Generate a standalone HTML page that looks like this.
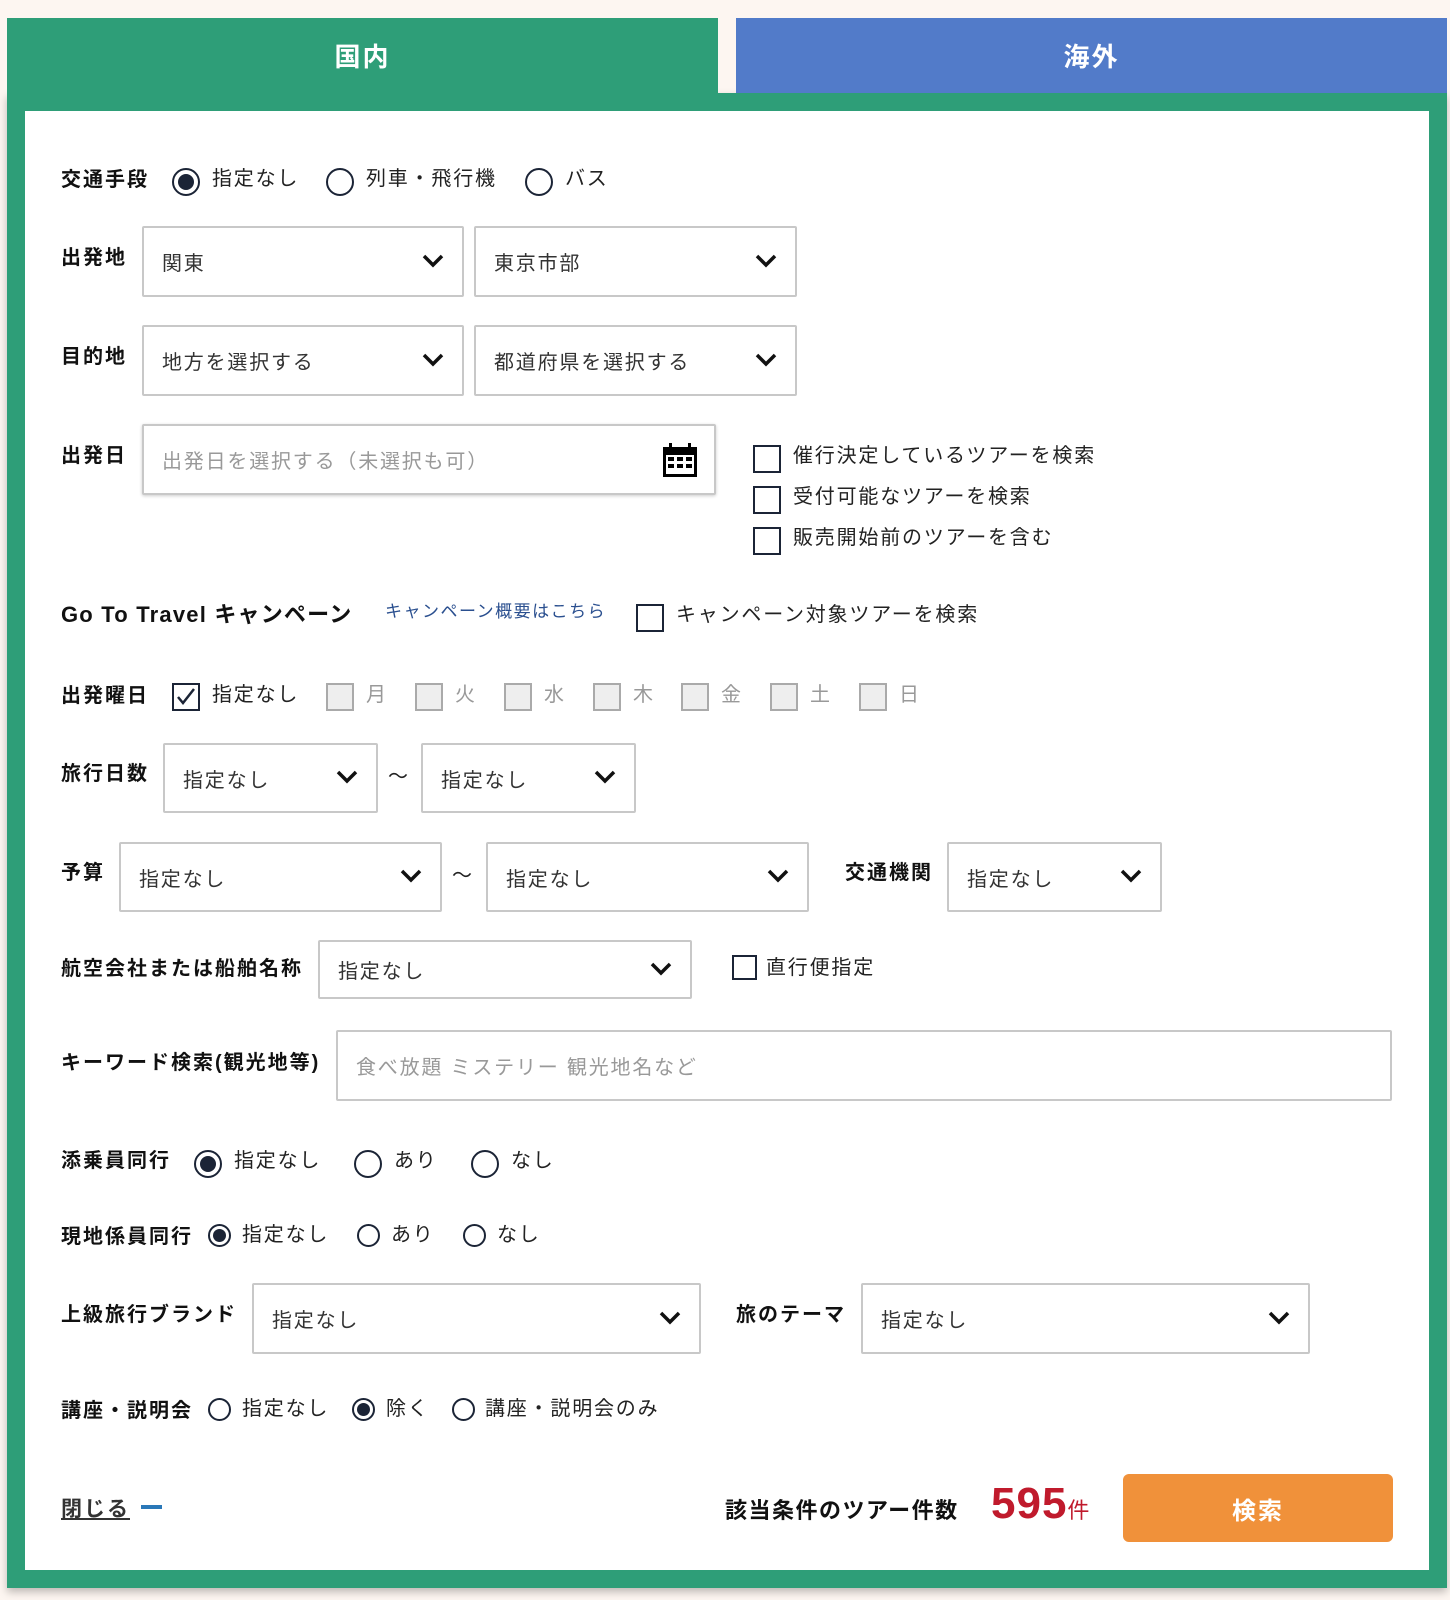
<!DOCTYPE html>
<html><head><meta charset="utf-8"><style>
*{box-sizing:border-box;margin:0;padding:0}
body{width:1450px;height:1600px;background:#fdf6f1;font-family:"Liberation Sans","Noto Sans CJK JP",sans-serif;color:#222;position:relative;overflow:hidden}
.a{position:absolute}
.tab{top:18px;height:75px;color:#fff;font-weight:bold;font-size:26px;display:flex;align-items:center;justify-content:center;letter-spacing:2px}
.lbl{position:absolute;font-weight:bold;font-size:20px;color:#111;line-height:1;letter-spacing:2px}
.t{position:absolute;font-size:20px;line-height:1;color:#222;letter-spacing:1.8px}
.sel{position:absolute;border:2px solid #c8c8c8;border-radius:2px;background:#fff;font-size:20px;color:#333;display:flex;align-items:center;padding-left:18px;letter-spacing:1.8px}
.sel svg{position:absolute;right:18px;top:50%;margin-top:-8px}
.rad{position:absolute;width:28px;height:28px;border:2px solid #1b2436;border-radius:50%;background:#fff}
.rad.on::after{content:"";position:absolute;left:4px;top:4px;width:16px;height:16px;border-radius:50%;background:#1b2436}
.rad.s{width:23px;height:23px}
.rad.s.on::after{left:3px;top:3px;width:13px;height:13px}
.cb{position:absolute;width:28px;height:28px;border:2px solid #1b2436;background:#fff}
.cb.d{border-color:#aaa;background:#eee}
</style></head><body>
<div class="a" style="left:7px;top:93px;width:1440px;height:1495px;background:#2e9e78;box-shadow:0 4px 8px rgba(0,0,0,.25)"></div>
<div class="a" style="left:7px;top:88px;width:711px;height:10px;background:#2e9e78"></div>
<div class="a tab" style="left:7px;width:711px;background:#2e9e78">国内</div>
<div class="a tab" style="left:736px;width:711px;background:#527bc9">海外</div>
<div class="a" style="left:25px;top:111px;width:1404px;height:1459px;background:#fff"></div>

<div class="lbl" style="left:61px;top:170px">交通手段</div>
<div class="rad on" style="left:172px;top:168px"></div><div class="t" style="left:212px;top:169px">指定なし</div>
<div class="rad" style="left:326px;top:168px"></div><div class="t" style="left:366px;top:169px">列車・飛行機</div>
<div class="rad" style="left:525px;top:168px"></div><div class="t" style="left:565px;top:169px">バス</div>

<div class="lbl" style="left:61px;top:248px">出発地</div>
<div class="sel" style="left:142px;top:226px;width:322px;height:71px">関東<svg width="22" height="14" viewBox="0 0 22 14"><path d="M2 2l9 9 9-9" stroke="#111" stroke-width="3.5" fill="none"/></svg></div>
<div class="sel" style="left:474px;top:226px;width:323px;height:71px">東京市部<svg width="22" height="14" viewBox="0 0 22 14"><path d="M2 2l9 9 9-9" stroke="#111" stroke-width="3.5" fill="none"/></svg></div>

<div class="lbl" style="left:61px;top:347px">目的地</div>
<div class="sel" style="left:142px;top:325px;width:322px;height:71px">地方を選択する<svg width="22" height="14" viewBox="0 0 22 14"><path d="M2 2l9 9 9-9" stroke="#111" stroke-width="3.5" fill="none"/></svg></div>
<div class="sel" style="left:474px;top:325px;width:323px;height:71px">都道府県を選択する<svg width="22" height="14" viewBox="0 0 22 14"><path d="M2 2l9 9 9-9" stroke="#111" stroke-width="3.5" fill="none"/></svg></div>

<div class="lbl" style="left:61px;top:446px">出発日</div>
<div class="sel" style="left:142px;top:424px;width:574px;height:71px;color:#999;box-shadow:0 1px 3px rgba(0,0,0,.2)">出発日を選択する（未選択も可）
<svg style="right:16px;margin-top:-18px" width="36" height="36" viewBox="0 0 36 36"><rect x="1" y="5" width="34" height="30" fill="#000"/><rect x="4" y="13" width="28" height="19" fill="#fff"/><rect x="6" y="15" width="6" height="4" fill="#000"/><rect x="15" y="15" width="6" height="4" fill="#000"/><rect x="24" y="15" width="6" height="4" fill="#000"/><rect x="6" y="22" width="6" height="4" fill="#000"/><rect x="15" y="22" width="6" height="4" fill="#000"/><rect x="24" y="22" width="6" height="4" fill="#000"/><rect x="7" y="1" width="3" height="7" fill="#000"/><rect x="26" y="1" width="3" height="7" fill="#000"/></svg></div>
<div class="cb" style="left:753px;top:445px"></div><div class="t" style="left:793px;top:446px">催行決定しているツアーを検索</div>
<div class="cb" style="left:753px;top:486px"></div><div class="t" style="left:793px;top:487px">受付可能なツアーを検索</div>
<div class="cb" style="left:753px;top:527px"></div><div class="t" style="left:793px;top:528px">販売開始前のツアーを含む</div>

<div class="lbl" style="left:61px;top:604px;font-size:22px;letter-spacing:1.2px">Go To Travel キャンペーン</div>
<div class="t" style="left:385px;top:603px;font-size:17px;color:#2a4f8f;letter-spacing:1.5px">キャンペーン概要はこちら</div>
<div class="cb" style="left:636px;top:604px"></div><div class="t" style="left:676px;top:605px">キャンペーン対象ツアーを検索</div>

<div class="lbl" style="left:61px;top:686px">出発曜日</div>
<div class="cb" style="left:172px;top:683px"><svg width="24" height="24" viewBox="0 0 24 24"><path d="M4 12l5 6 11-14" stroke="#1b2436" stroke-width="2.5" fill="none"/></svg></div>
<div class="t" style="left:212px;top:685px">指定なし</div>
<div class="cb d" style="left:326px;top:683px"></div><div class="t" style="left:366px;top:685px;color:#999">月</div>
<div class="cb d" style="left:415px;top:683px"></div><div class="t" style="left:455px;top:685px;color:#999">火</div>
<div class="cb d" style="left:504px;top:683px"></div><div class="t" style="left:544px;top:685px;color:#999">水</div>
<div class="cb d" style="left:593px;top:683px"></div><div class="t" style="left:633px;top:685px;color:#999">木</div>
<div class="cb d" style="left:681px;top:683px"></div><div class="t" style="left:721px;top:685px;color:#999">金</div>
<div class="cb d" style="left:770px;top:683px"></div><div class="t" style="left:810px;top:685px;color:#999">土</div>
<div class="cb d" style="left:859px;top:683px"></div><div class="t" style="left:899px;top:685px;color:#999">日</div>

<div class="lbl" style="left:61px;top:764px">旅行日数</div>
<div class="sel" style="left:163px;top:743px;width:215px;height:70px">指定なし<svg width="22" height="14" viewBox="0 0 22 14"><path d="M2 2l9 9 9-9" stroke="#111" stroke-width="3.5" fill="none"/></svg></div>
<div class="t" style="left:388px;top:767px">〜</div>
<div class="sel" style="left:421px;top:743px;width:215px;height:70px">指定なし<svg width="22" height="14" viewBox="0 0 22 14"><path d="M2 2l9 9 9-9" stroke="#111" stroke-width="3.5" fill="none"/></svg></div>

<div class="lbl" style="left:61px;top:863px">予算</div>
<div class="sel" style="left:119px;top:842px;width:323px;height:70px">指定なし<svg width="22" height="14" viewBox="0 0 22 14"><path d="M2 2l9 9 9-9" stroke="#111" stroke-width="3.5" fill="none"/></svg></div>
<div class="t" style="left:452px;top:866px">〜</div>
<div class="sel" style="left:486px;top:842px;width:323px;height:70px">指定なし<svg width="22" height="14" viewBox="0 0 22 14"><path d="M2 2l9 9 9-9" stroke="#111" stroke-width="3.5" fill="none"/></svg></div>
<div class="lbl" style="left:845px;top:863px">交通機関</div>
<div class="sel" style="left:947px;top:842px;width:215px;height:70px">指定なし<svg width="22" height="14" viewBox="0 0 22 14"><path d="M2 2l9 9 9-9" stroke="#111" stroke-width="3.5" fill="none"/></svg></div>

<div class="lbl" style="left:61px;top:959px">航空会社または船舶名称</div>
<div class="sel" style="left:318px;top:940px;width:374px;height:59px">指定なし<svg width="22" height="14" viewBox="0 0 22 14"><path d="M2 2l9 9 9-9" stroke="#111" stroke-width="3.5" fill="none"/></svg></div>
<div class="cb" style="left:732px;top:955px;width:25px;height:25px"></div><div class="t" style="left:766px;top:958px">直行便指定</div>

<div class="lbl" style="left:61px;top:1053px">キーワード検索(観光地等)</div>
<div class="sel" style="left:336px;top:1030px;width:1056px;height:71px;color:#999">食べ放題 ミステリー 観光地名など</div>

<div class="lbl" style="left:61px;top:1151px">添乗員同行</div>
<div class="rad on" style="left:194px;top:1150px"></div><div class="t" style="left:234px;top:1151px">指定なし</div>
<div class="rad" style="left:354px;top:1150px"></div><div class="t" style="left:394px;top:1151px">あり</div>
<div class="rad" style="left:471px;top:1150px"></div><div class="t" style="left:511px;top:1151px">なし</div>

<div class="lbl" style="left:61px;top:1227px">現地係員同行</div>
<div class="rad s on" style="left:208px;top:1224px"></div><div class="t" style="left:242px;top:1225px">指定なし</div>
<div class="rad s" style="left:357px;top:1224px"></div><div class="t" style="left:391px;top:1225px">あり</div>
<div class="rad s" style="left:463px;top:1224px"></div><div class="t" style="left:497px;top:1225px">なし</div>

<div class="lbl" style="left:61px;top:1305px">上級旅行ブランド</div>
<div class="sel" style="left:252px;top:1283px;width:449px;height:71px">指定なし<svg width="22" height="14" viewBox="0 0 22 14"><path d="M2 2l9 9 9-9" stroke="#111" stroke-width="3.5" fill="none"/></svg></div>
<div class="lbl" style="left:736px;top:1305px">旅のテーマ</div>
<div class="sel" style="left:861px;top:1283px;width:449px;height:71px">指定なし<svg width="22" height="14" viewBox="0 0 22 14"><path d="M2 2l9 9 9-9" stroke="#111" stroke-width="3.5" fill="none"/></svg></div>

<div class="lbl" style="left:61px;top:1401px">講座・説明会</div>
<div class="rad s on" style="left:352px;top:1398px"></div>
<div class="rad s" style="left:208px;top:1398px"></div><div class="t" style="left:242px;top:1399px">指定なし</div>
<div class="t" style="left:386px;top:1399px">除く</div>
<div class="rad s" style="left:452px;top:1398px"></div><div class="t" style="left:485px;top:1399px">講座・説明会のみ</div>

<div class="lbl" style="left:61px;top:1499px;text-decoration:underline;color:#333;font-size:21px">閉じる</div>
<div class="a" style="left:141px;top:1505px;width:21px;height:4px;background:#2a78b8"></div>
<div class="lbl" style="left:725px;top:1500px;font-size:22px;letter-spacing:1.5px">該当条件のツアー件数</div>
<div class="a" style="left:991px;top:1482px;font-weight:bold;font-size:44px;color:#c01a2c;line-height:1;letter-spacing:1px">595<span style="font-size:22px;font-weight:normal">件</span></div>
<div class="a" style="left:1123px;top:1474px;width:270px;height:68px;background:#f0913a;border-radius:6px;color:#fff;font-weight:bold;font-size:24px;display:flex;align-items:center;justify-content:center;letter-spacing:2px">検索</div>
</body></html>
